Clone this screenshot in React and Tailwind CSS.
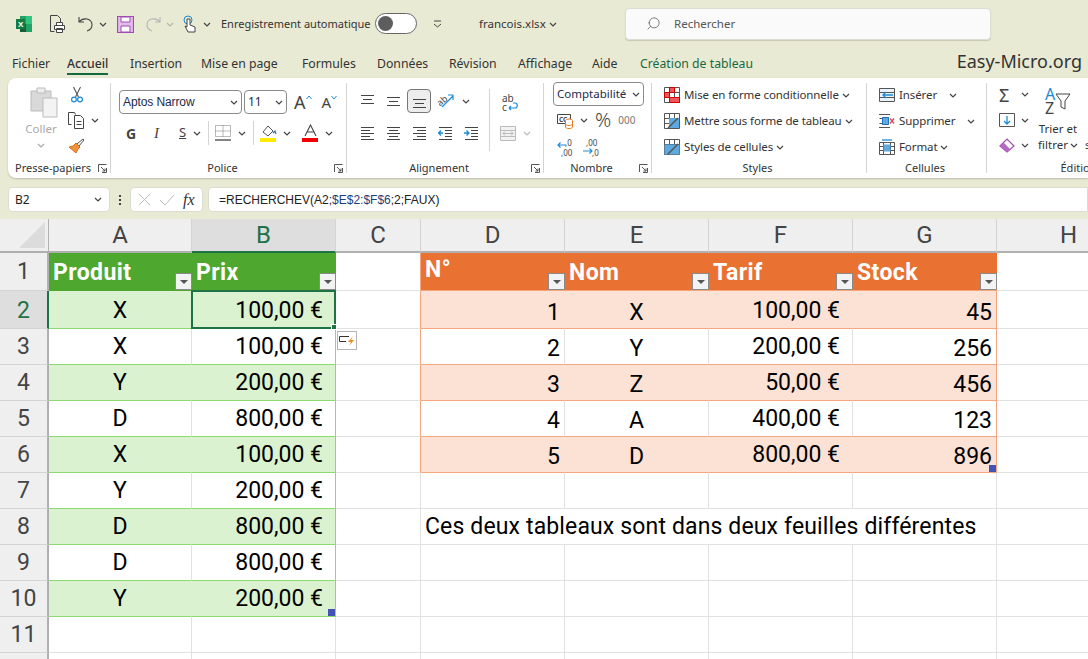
import { Search } from "lucide-react";

const ui = "font-['Noto_Sans',sans-serif]";
const COLS = ["A", "B", "C", "D", "E", "F", "G", "H"];
const HEIGHTS = [38, 38, 36, 36, 36, 36, 36, 36, 36, 36, 36, 36];

const LEFT = [
  ["X", "100,00 €"], ["X", "100,00 €"], ["Y", "200,00 €"], ["D", "800,00 €"], ["X", "100,00 €"],
  ["Y", "200,00 €"], ["D", "800,00 €"], ["D", "800,00 €"], ["Y", "200,00 €"],
];
const RIGHT = [
  ["1", "X", "100,00 €", "45"], ["2", "Y", "200,00 €", "256"], ["3", "Z", "50,00 €", "456"],
  ["4", "A", "400,00 €", "123"], ["5", "D", "800,00 €", "896"],
];

function Chev({ className = "", color = "#444" }) {
  return (
    <svg width="8" height="5" viewBox="0 0 8 5" className={`shrink-0 ${className}`}>
      <path d="M1 1l3 3 3-3" fill="none" stroke={color} strokeWidth="1.2" />
    </svg>
  );
}

function Launcher() {
  return (
    <svg width="9" height="9" viewBox="0 0 9 9" className="shrink-0">
      <path d="M.5 8V.5h8M8.5 4v4.5H4M3 3l4 4M7 4.5V7H4.5" fill="none" stroke="#555" strokeWidth="1" />
    </svg>
  );
}

function Lines({ rows, blue }) {
  return (
    <svg width="15" height="14" viewBox="0 0 15 14" className="shrink-0">
      {rows.map(([x1, x2, y], i) => (
        <path key={i} d={`M${x1} ${y}.5H${x2}`} stroke="#444" strokeWidth="1" />
      ))}
      {blue === "out" && <path d="M5 7H0.5M3 4.5L.5 7 3 9.5" fill="none" stroke="#1e8bd8" strokeWidth="1.3" />}
      {blue === "in" && <path d="M0 7h4.5M2.5 4.5L5 7 2.5 9.5" fill="none" stroke="#1e8bd8" strokeWidth="1.3" />}
    </svg>
  );
}

function TableIcon({ children }) {
  return (
    <svg width="16" height="16" viewBox="0 0 16 16" className="shrink-0">
      <path d="M.5.5h15v15H.5zM.5 5.5h15M.5 10.5h15M5.5.5v15M10.5.5v15" fill="#fff" stroke="#555" strokeWidth="1" />
      {children}
    </svg>
  );
}

function Group({ label, width, last, launcher = true, children }) {
  return (
    <div className={`${width} h-[90px] shrink-0 flex flex-col ${last ? "" : "border-r border-[#d4d4d4]"}`}>
      <div className="h-[78px] shrink-0">{children}</div>
      <div className="h-[14px] shrink-0 flex items-center pr-[3px] text-[11px] leading-[14px] text-[#333]">
        <span className="flex-1 text-center whitespace-nowrap">{label}</span>
        {launcher && <Launcher />}
      </div>
    </div>
  );
}

function StyleRow({ icon, text, chevGap = "ml-[3px]" }) {
  return (
    <div className="h-[26px] flex items-center pl-[12px]">
      {icon}
      <span className="ml-[4px] text-[11.5px] text-[#333] whitespace-nowrap tracking-[-0.1px] -mt-[1px]">{text}</span>
      <Chev className={chevGap} />
    </div>
  );
}

function Ribbon() {
  return (
    <div className={`ml-[8px] mt-[3px] h-[100px] bg-white rounded-l-[8px] shadow-[0_1px_2px_rgba(0,0,0,0.2)] flex py-[5px] ${ui}`}>
      <Group label="Presse-papiers" width="w-[103px]">
        <div className="flex pl-[16px]">
          <div className="w-[40px] flex flex-col items-center pt-[3px]">
            <svg width="28" height="32" viewBox="0 0 28 32">
              <path d="M1 5h20v20H1z" fill="#d9d9d9" stroke="#bbb" />
              <path d="M7 2h8v5H7z" fill="#eee" stroke="#bbb" />
              <path d="M13 12h14v19H13z" fill="#f3f3f3" stroke="#bbb" />
            </svg>
            <span className="text-[11.5px] text-[#aaa] leading-[16px] mt-[3px] mr-[6px]">Coller</span>
            <Chev className="mt-[6px] mr-[6px]" color="#aaa" />
          </div>
          <div className="flex flex-col pl-[4px] pt-[3px]">
            <svg width="12" height="17" viewBox="0 0 12 17" className="ml-[3px]">
              <path d="M2.500 1l5 10M9.500 1l-5 10" stroke="#555" strokeWidth="1.1" fill="none" />
              <circle cx="3" cy="13.500" r="2.400" fill="none" stroke="#1e8bd8" strokeWidth="1.2" />
              <circle cx="9" cy="13.500" r="2.400" fill="none" stroke="#1e8bd8" strokeWidth="1.2" />
            </svg>
            <div className="flex items-center mt-[9px]">
              <svg width="17" height="17" viewBox="0 0 17 17">
                <path d="M3.500 12.500H.5V.5h6l1 2M6.500 3.500h6l3 3v10h-9z" fill="#fff" stroke="#444" />
                <path d="M8.500 9.500h5M8.500 12.500h5" stroke="#444" />
              </svg>
              <Chev className="ml-[6px]" />
            </div>
            <svg width="17" height="16" viewBox="0 0 17 16" className="mt-[9px]">
              <path d="M1 9l7 6 2-4 2-2-4-4-3 3z" fill="#f0923b" stroke="#d9701a" />
              <path d="M9 6l6-5 1 1-5 6" fill="none" stroke="#555" />
            </svg>
          </div>
        </div>
      </Group>

      <Group label="Police" width="w-[236px]">
        <div className="flex items-center pl-[8px] pt-[7px]">
          <div className="w-[123px] h-[24px] border border-[#8a8a8a] rounded-[4px] flex items-center justify-between px-[3px] text-[12px] text-[#1c2b4a]">
            <span className="font-['Liberation_Sans',sans-serif] tracking-[-0.1px]">Aptos Narrow</span>
            <Chev />
          </div>
          <div className="ml-[2px] w-[43px] h-[24px] border border-[#8a8a8a] rounded-[4px] flex items-center justify-between px-[3px] text-[12px] text-[#1c2b4a]">
            <span>11</span>
            <Chev />
          </div>
          <span className="ml-[7px] text-[18px] leading-[20px] text-[#444]">A</span>
          <svg width="6" height="5" viewBox="0 0 6 5" className="mb-[9px]"><path d="M.5 4L3 1l2.500 3" fill="none" stroke="#1e8bd8" /></svg>
          <span className="ml-[10px] text-[15px] leading-[20px] text-[#444]">A</span>
          <svg width="6" height="5" viewBox="0 0 6 5" className="mb-[9px]"><path d="M.5 1L3 4l2.500-3" fill="none" stroke="#1e8bd8" /></svg>
        </div>
        <div className="flex items-center h-[26px] mt-[6px] pl-[15px] text-[#444]">
          <span className="w-[28px] text-[14px] font-bold">G</span>
          <span className="w-[25px] text-[15px] italic font-['Liberation_Serif',serif]">I</span>
          <span className="w-[14px] text-[13px] underline">S</span>
          <Chev />
          <div className="w-px h-[24px] bg-[#d4d4d4] ml-[7px]" />
          <svg width="16" height="16" viewBox="0 0 16 16" className="ml-[6px]">
            <path d="M.5.5h15v11H.5zM8 .5v11M.5 6h15" fill="none" stroke="#777" strokeDasharray="1 1" />
            <path d="M0 15h16" stroke="#333" strokeWidth="1.2" />
          </svg>
          <Chev className="ml-[7px]" />
          <div className="w-px h-[24px] bg-[#d4d4d4] ml-[7px]" />
          <svg width="17" height="18" viewBox="0 0 17 18" className="ml-[6px]">
            <path d="M3 8l5-6 5 5-5 5z" fill="#fff" stroke="#555" />
            <path d="M13 9l2-2 1 3" fill="none" stroke="#1e6fb8" strokeWidth="1.2" />
            <path d="M0 14h16v4H0z" fill="#ffea00" />
          </svg>
          <Chev className="ml-[6px]" />
          <svg width="17" height="18" viewBox="0 0 17 18" className="ml-[11px]">
            <path d="M3 12L8.500 1 14 12M5 8h7" fill="none" stroke="#444" strokeWidth="1.100" />
            <path d="M0 14h16v4H0z" fill="#f00000" />
          </svg>
          <Chev className="ml-[6px]" />
        </div>
      </Group>

      <Group label="Alignement" width="w-[197px]">
        <div className="flex">
          <div className="w-[142px] pl-[13px]">
            <div className="flex items-center h-[26px] mt-[5px] gap-[11px]">
              <Lines rows={[[1, 14, 1], [3, 12, 5], [1, 14, 9]]} />
              <Lines rows={[[1, 14, 3], [3, 12, 7], [1, 14, 11]]} />
              <div className="w-[24px] h-[24px] -ml-[5px] border border-[#777] rounded-[4px] bg-[#ededed] flex items-center justify-center">
                <Lines rows={[[1, 14, 5], [3, 12, 9], [1, 14, 13]]} />
              </div>
              <svg width="18" height="16" viewBox="0 0 18 16" className="-ml-[5px] overflow-visible">
                <text x="0" y="11" fontSize="9" fill="#444" transform="rotate(-40 5 8)" fontFamily="Noto Sans">ab</text>
                <path d="M5 14L16 3M11 2h5v5" fill="none" stroke="#1e8bd8" strokeWidth="1.200" />
              </svg>
              <Chev className="-ml-[4px]" />
            </div>
            <div className="flex items-center h-[26px] mt-[6px] gap-[11px]">
              <Lines rows={[[1, 14, 1], [1, 10, 4], [1, 14, 7], [1, 10, 10], [1, 14, 13]]} />
              <Lines rows={[[1, 14, 1], [3, 12, 4], [1, 14, 7], [3, 12, 10], [1, 14, 13]]} />
              <Lines rows={[[1, 14, 1], [5, 14, 4], [1, 14, 7], [5, 14, 10], [1, 14, 13]]} />
              <Lines rows={[[1, 14, 1], [7, 14, 4], [7, 14, 7], [7, 14, 10], [1, 14, 13]]} blue="out" />
              <Lines rows={[[1, 14, 1], [7, 14, 4], [7, 14, 7], [7, 14, 10], [1, 14, 13]]} blue="in" />
            </div>
          </div>
          <div className="w-px h-[62px] bg-[#d4d4d4] mt-[6px]" />
          <div className="pl-[12px] pt-[11px]">
            <svg width="18" height="19" viewBox="0 0 18 19" className="overflow-visible">
              <text x="0" y="8" fontSize="10" fill="#444" fontFamily="Noto Sans">ab</text>
              <text x="0" y="17" fontSize="10" fill="#444" fontFamily="Noto Sans">c</text>
              <path d="M7 14h6c3 0 3-5 0-5h-2M7 14l2-2M7 14l2 2" fill="none" stroke="#1e8bd8" strokeWidth="1.200" />
            </svg>
            <div className="flex items-center mt-[13px] -ml-[2px]">
              <svg width="16" height="15" viewBox="0 0 16 15">
                <path d="M.5.5h15v14H.5z" fill="#f2f2f2" stroke="#bbb" />
                <path d="M.5 4.500h15M.5 10.500h15M3 7.500h10M5 5.500l-2 2 2 2M11 5.500l2 2-2 2" fill="none" stroke="#bbb" />
              </svg>
              <Chev className="ml-[7px]" color="#bbb" />
            </div>
          </div>
        </div>
      </Group>

      <Group label="Nombre" width="w-[108px]">
        <div className="pl-[9px]">
          <div className="w-[91px] h-[24px] -mt-px border border-[#8a8a8a] rounded-[4px] flex items-center justify-between px-[3px] text-[11.5px] text-[#1c2b4a]">
            <span>Comptabilité</span>
            <Chev />
          </div>
          <div className="flex items-center h-[28px] pl-[4px]">
            <svg width="17" height="17" viewBox="0 0 17 17">
              <path d="M.5 2.500h13v9H.5z" fill="#fff" stroke="#444" />
              <text x="2" y="9.500" fontSize="6.500" fontWeight="bold" fill="#444" fontFamily="Noto Sans">CC</text>
              <ellipse cx="12" cy="8.500" rx="3.500" ry="1.500" fill="#fff" stroke="#e87a1d" />
              <path d="M8.500 8.500v6.500c0 2 7 2 7 0V8.500M8.500 12c0 2 7 2 7 0" fill="#fff" stroke="#e87a1d" />
            </svg>
            <Chev className="ml-[6px]" />
            <span className="ml-[7px] text-[20px] font-light leading-[24px] text-[#444]">%</span>
            <span className="ml-[7px] text-[10px] text-[#777]">000</span>
          </div>
          <div className="flex items-center h-[26px] pl-[4px] gap-[9px]">
            <svg width="17" height="19" viewBox="0 0 17 19">
              <text x="8" y="8" fontSize="8" fill="#444" fontFamily="Noto Sans">,0</text>
              <text x="4" y="18" fontSize="8" fill="#444" fontFamily="Noto Sans">,00</text>
              <path d="M9 7H1M3.500 4.500L1 7l2.500 2.500" fill="none" stroke="#1e8bd8" strokeWidth="1.200" />
            </svg>
            <svg width="17" height="19" viewBox="0 0 17 19">
              <text x="3" y="8" fontSize="8" fill="#444" fontFamily="Noto Sans">,00</text>
              <text x="9" y="18" fontSize="8" fill="#444" fontFamily="Noto Sans">,0</text>
              <path d="M0 13h9M6.500 10.500L9 13l-2.500 2.500" fill="none" stroke="#1e8bd8" strokeWidth="1.200" />
            </svg>
          </div>
        </div>
      </Group>

      <Group label="Styles" width="w-[215px]" launcher={false}>
        <div className="-mt-[1px]">
          <StyleRow text="Mise en forme conditionnelle" icon={
            <TableIcon><path d="M5.500.5h5v5h-5zM.5 5.500h5v5h-5zM5.500 10.500h10v5h-10z" fill="#f0565a" stroke="#c00" /></TableIcon>
          } />
          <StyleRow text="Mettre sous forme de tableau" icon={
            <TableIcon><path d="M5 5h10v10H5z" fill="#5da9e0" /><path d="M4 15L14 5" stroke="#555" strokeWidth="1.500" /></TableIcon>
          } />
          <StyleRow text="Styles de cellules" icon={
            <TableIcon><path d="M.5 5.500h15v10H.5z" fill="#5da9e0" /><path d="M4 15L14 5" stroke="#555" strokeWidth="1.500" /></TableIcon>
          } />
        </div>
      </Group>

      <Group label="Cellules" width="w-[120px]" launcher={false}>
        <div className="-mt-[1px]">
          <StyleRow text="Insérer" chevGap="ml-[12px]" icon={
            <svg width="16" height="14" viewBox="0 0 16 14" className="shrink-0">
              <path d="M.5.5h15v13H.5zM.5 4.500h15M.5 9.500h15" fill="#e8f3fb" stroke="#555" />
              <path d="M14 7H4M7 4L4 7l3 3" fill="none" stroke="#1e8bd8" strokeWidth="1.300" />
            </svg>
          } />
          <StyleRow text="Supprimer" chevGap="ml-[12px]" icon={
            <svg width="16" height="14" viewBox="0 0 16 14" className="shrink-0">
              <path d="M0 .5h11M0 13.500h11M.5 4.500H3M.5 9.500H3" fill="none" stroke="#555" />
              <path d="M3.500 3.500h6v7h-6z" fill="#5da9e0" stroke="#1e6fb8" />
              <path d="M11 4.500l4 5M15 4.500l-4 5" stroke="#e8484d" strokeWidth="1.300" />
            </svg>
          } />
          <StyleRow text="Format" icon={
            <svg width="16" height="16" viewBox="0 0 16 16" className="shrink-0">
              <path d="M.5 3.500h15v12H.5zM.5 7.500h15M.5 11.500h15M4.500 3.500v12M11.500 3.500v12" fill="#fff" stroke="#555" />
              <path d="M4.500 5.500h7v7h-7z" fill="#5da9e0" />
              <path d="M3 1h10" stroke="#1e8bd8" strokeWidth="1.300" />
            </svg>
          } />
        </div>
      </Group>

      <Group label="Édition" width="w-[186px]" last launcher={false}>
        <div className="flex pl-[12px]">
          <div className="w-[39px] shrink-0 -mt-[1px]">
            <div className="h-[25px] flex items-center">
              <span className="w-[16px] text-[18px] leading-[20px] text-[#444]">Σ</span>
              <Chev className="ml-[6px]" />
            </div>
            <div className="h-[26px] flex items-center">
              <svg width="16" height="14" viewBox="0 0 16 14" className="shrink-0">
                <path d="M.5.5h15v13H.5z" fill="#fff" stroke="#555" />
                <path d="M8 3v8M5 8l3 3 3-3" fill="none" stroke="#1e8bd8" strokeWidth="1.300" />
              </svg>
              <Chev className="ml-[6px]" />
            </div>
            <div className="h-[25px] flex items-center">
              <svg width="16" height="15" viewBox="0 0 16 15" className="shrink-0">
                <path d="M1 8l7-7 7 7-7 6z" fill="#fff" stroke="#a04cb0" strokeWidth="1.200" />
                <path d="M1 8l3.500-3.500 7 7L8 14z" fill="#b768c4" />
              </svg>
              <Chev className="ml-[6px]" />
            </div>
          </div>
          <div className="flex flex-col items-center w-[40px] shrink-0">
            <div className="flex items-start h-[30px] mt-[4px]">
              <div className="flex flex-col text-[16px] leading-[14px]">
                <span className="text-[#1e8bd8]">A</span>
                <span className="text-[#444]">Z</span>
              </div>
              <svg width="16" height="18" viewBox="0 0 16 18" className="mt-[6px]">
                <path d="M1 1h14L10 8v8l-4-2V8z" fill="#fff" stroke="#444" />
              </svg>
            </div>
            <span className="text-[11.5px] leading-[16px] mt-[4px] text-[#333] whitespace-nowrap">Trier et</span>
            <span className="text-[11.5px] leading-[16px] text-[#333] flex items-center whitespace-nowrap">filtrer<Chev className="ml-[2px]" /></span>
          </div>
          <span className="ml-[7px] mt-[54px] text-[11.5px] leading-[16px] text-[#333]">s</span>
        </div>
      </Group>
    </div>
  );
}

function FilterButton() {
  return (
    <div className="absolute right-0 bottom-0 w-[17px] h-[17px] bg-[#f3f3f3] border border-[#8a8a8a] flex items-center justify-center">
      <div className="w-0 h-0 border-l-[4px] border-r-[4px] border-t-[4px] border-l-transparent border-r-transparent border-t-[#555]" />
    </div>
  );
}

const cell = "relative flex items-center border-r border-b border-[#e1e1e1] text-[23px] leading-[26px] text-black whitespace-nowrap";
const headCell = "relative flex items-center pl-[4px] pt-[2px] text-white font-bold text-[23px] leading-[26px] tracking-[0.4px] border-b";

function LeftCells({ r }) {
  if (r === 0) {
    return (
      <>
        <div className={`${headCell} bg-[#4ea72e] border-[#4ea72e]`}>Produit<FilterButton /></div>
        <div className={`${headCell} bg-[#4ea72e] border-[#4ea72e]`}>Prix<FilterButton /></div>
      </>
    );
  }
  const row = LEFT[r - 1];
  if (!row) {
    return (<><div className={cell} /><div className={cell} /></>);
  }
  const band = r % 2 === 1;
  return (
    <>
      <div className={`${cell} justify-center border-b-[#8ed973] ${r === 1 ? "pt-[3px]" : ""} ${band ? "bg-[#daf2d0] border-r-[#daf2d0]" : ""}`}>{row[0]}</div>
      <div className={`${cell} justify-end pr-[12px] border-b-[#8ed973] border-r-[#8ed973] ${r === 1 ? "pt-[3px]" : ""} ${band ? "bg-[#daf2d0]" : ""}`}>
        {row[1]}
        {r === 1 && (
          <div className="absolute z-10 -left-px -top-px -right-px -bottom-px border-2 border-[#1f7246]">
            <div className="absolute -right-[3px] -bottom-[3px] w-[6px] h-[6px] bg-[#1f7246] border border-white" />
          </div>
        )}
        {r === 9 && <div className="absolute right-0 bottom-0 w-[7px] h-[7px] bg-[#4352b5]" />}
      </div>
    </>
  );
}

function RightCells({ r }) {
  if (r === 0) {
    return ["N°", "Nom", "Tarif", "Stock"].map((t) => (
      <div key={t} className={`${headCell} bg-[#e97132] border-[#f6a57d]`}>
        <span className={t === "N°" ? "-mt-[6px]" : ""}>{t}</span>
        <FilterButton />
      </div>
    ));
  }
  if (r === 7) {
    return <div className={`${cell} col-span-4 pl-[4px] tracking-[0.14px] border-r-[#e1e1e1]`}>Ces deux tableaux sont dans deux feuilles différentes</div>;
  }
  const row = RIGHT[r - 1];
  if (!row) {
    return [0, 1, 2, 3].map((i) => <div key={i} className={cell} />);
  }
  const band = r % 2 === 1;
  const inner = `border-b-[#f6a57d] ${band ? "bg-[#fbe2d5] border-r-[#fbe2d5]" : ""}`;
  const low = r === 1 ? "pt-[6px]" : "pt-[4px]";
  return (
    <>
      <div className={`${cell} justify-end pr-[4px] ${low} ${inner}`}>{row[0]}</div>
      <div className={`${cell} justify-center ${low} ${inner}`}>{row[1]}</div>
      <div className={`${cell} justify-end pr-[12px] ${r === 1 ? "pt-[2px]" : ""} ${inner}`}>{row[2]}</div>
      <div className={`${cell} justify-end pr-[4px] ${low} border-b-[#f6a57d] border-r-[#f6a57d] ${band ? "bg-[#fbe2d5]" : ""}`}>
        {row[3]}
        {r === 5 && <div className="absolute right-0 bottom-0 w-[7px] h-[7px] bg-[#4352b5]" />}
      </div>
    </>
  );
}

function Sheet() {
  return (
    <div className="mt-[7px] grid grid-cols-[49px_143px_144px_85px_144px_144px_144px_144px_144px] font-['Roboto',sans-serif] bg-white">
      <div className="h-[34px] bg-[#efefef] border-r border-b-2 border-[#b0b0b0] flex items-end justify-end p-[3px]">
        <div className="w-0 h-0 border-l-[26px] border-b-[26px] border-l-transparent border-b-[#dcdcdc]" />
      </div>
      {COLS.map((c) => (
        <div key={c} className={`h-[34px] flex items-center justify-center text-[24px] leading-[28px] border-r border-[#d4d4d4] border-b-2 ${c === "B" ? "bg-[#dedede] text-[#1f7246] border-b-[#1f7246]" : "bg-[#efefef] text-[#444] border-b-[#b0b0b0]"}`}>{c}</div>
      ))}
      {HEIGHTS.map((h, r) => (
        <div key={r} className="contents">
          <div style={{ height: h }} className={`flex items-center justify-center text-[23px] leading-[26px] border-b border-[#d4d4d4] border-r-2 ${r === 1 ? "bg-[#dedede] text-[#1f7246] border-r-[#1f7246] pt-[3px]" : "bg-[#efefef] text-[#444] border-r-[#b0b0b0]"}`}>{r + 1}</div>
          <LeftCells r={r} />
          <div className={`${cell} ${r <= 5 ? "border-r-[#f6a57d]" : ""}`}>
            {r === 2 && (
              <div className="absolute left-[1px] top-[2px] w-[20px] h-[19px] bg-white border border-[#b5b5b5] flex items-center justify-center">
                <svg width="16" height="12" viewBox="0 0 16 12">
                  <path d="M10 1.500H.5v5H7" fill="none" stroke="#333" />
                  <path d="M14 1l-5 6h3l-2 4 5-6h-3z" fill="#ee8a1e" />
                </svg>
              </div>
            )}
          </div>
          <RightCells r={r} />
          <div className={cell} />
        </div>
      ))}
    </div>
  );
}

export default function App() {
  return (
    <div className={`w-[1088px] h-[659px] overflow-hidden bg-[#e9ead3] ${ui}`}>
      {/* barre de titre */}
      <div className="h-[48px] flex items-center pl-[16px] text-[#333]">
        <svg width="16" height="16" viewBox="0 0 16 16">
          <path d="M4 0h12v16H4z" fill="#21a366" />
          <path d="M10 0h6v8h-6z" fill="#33c481" />
          <path d="M4 8h6v8H4z" fill="#185c37" />
          <path d="M0 3h9v10H0z" fill="#107c41" />
          <text x="2" y="11" fontSize="8" fontWeight="bold" fill="#fff" fontFamily="Liberation Sans">X</text>
        </svg>
        <svg width="15" height="18" viewBox="0 0 15 18" className="ml-[18px]">
          <path d="M.5.500h7l3 3v4M.5.500v16h4" fill="none" stroke="#444" />
          <path d="M4.500 10.500h10v4h-10zM6.500 10.500v-3h6v3M6.500 13.500h6v4h-6z" fill="#fff" stroke="#444" />
        </svg>
        <svg width="16" height="16" viewBox="0 0 16 16" className="ml-[13px]">
          <path d="M1 1v5h5M1 6c4-5 13-4 13 3 0 3-2 5-5 6" fill="none" stroke="#444" strokeWidth="1.100" />
        </svg>
        <Chev className="ml-[5px]" />
        <svg width="17" height="17" viewBox="0 0 17 17" className="ml-[10px]">
          <path d="M.5.500h16v16H.500z" fill="#e4bcec" stroke="#a04cb0" strokeWidth="1.200" />
          <path d="M4 1h9v5H4zM4 10h9v6H4z" fill="#fff" stroke="#a04cb0" />
        </svg>
        <svg width="16" height="16" viewBox="0 0 16 16" className="ml-[11px]">
          <path d="M15 1v5h-5M15 6C11 1 2 2 2 9c0 3 2 5 5 6" fill="none" stroke="#b5b5b5" strokeWidth="1.100" />
        </svg>
        <Chev className="ml-[5px]" color="#b5b5b5" />
        <svg width="13" height="18" viewBox="0 0 13 18" className="ml-[9px]">
          <circle cx="5" cy="5" r="4" fill="none" stroke="#1e8bd8" />
          <path d="M4 4v8l-2-1 3 6h7v-5l-5-2V4z" fill="#fff" stroke="#444" />
        </svg>
        <Chev className="ml-[7px]" />
        <span className="ml-[10px] w-[147px] text-[11px] whitespace-nowrap">Enregistrement automatique</span>
        <div className="ml-[7px] w-[42px] h-[21px] bg-white border border-[#666] rounded-full flex items-center pl-[2px] -mt-px">
          <div className="w-[15px] h-[15px] rounded-full bg-[#5d5d5d]" />
        </div>
        <svg width="9" height="8" viewBox="0 0 9 8" className="ml-[16px]">
          <path d="M1 1h7M1 4l3.500 3L8 4" fill="none" stroke="#444" />
        </svg>
        <span className="ml-[37px] w-[65px] text-[11.500px] whitespace-nowrap">francois.xlsx</span>
        <Chev className="ml-[4px] w-[10px]" />
        <div className="ml-[67px] w-[366px] h-[32px] -mt-[1px] bg-[#fafafa] rounded-[4px] border border-[#dcdcd0] shadow-[0_1px_1px_rgba(0,0,0,0.15)] flex items-center pl-[20px] text-[11.500px] text-[#555]">
          <Search size={15} strokeWidth={1.2} className="-scale-x-100 text-[#555]" />
          <span className="ml-[13px]">Rechercher</span>
        </div>
      </div>

      {/* onglets */}
      <div className="h-[27px] flex items-start pl-[12px] pt-[7px] text-[12.250px] text-[#333]">
        {[["Fichier", "w-[55px]"], ["Accueil", "w-[63px]"], ["Insertion", "w-[71px]"], ["Mise en page", "w-[101px]"], ["Formules", "w-[75px]"], ["Données", "w-[72px]"], ["Révision", "w-[69px]"], ["Affichage", "w-[74px]"], ["Aide", "w-[48px]"]].map(([t, w]) => (
          <div key={t} className={`${w} shrink-0`}>
            <span className={`inline-block leading-[18px] ${t === "Accueil" ? "border-b-[2px] border-[#17693f] font-medium" : ""}`}>{t}</span>
          </div>
        ))}
        <span className="text-[#17693f] leading-[18px]">Création de tableau</span>
        <span className="ml-auto mr-[6px] -mt-[5px] text-[18px] leading-[22px] text-[#333]">Easy-Micro.org</span>
      </div>

      <Ribbon />

      {/* barre de formule */}
      <div className={`mt-[9px] h-[25px] flex items-center pl-[8px] text-[12px] text-[#222] ${ui}`}>
        <div className="w-[102px] h-[25px] bg-white rounded-[4px] border border-[#dcdcd0] flex items-center justify-between pl-[6px] pr-[6px]">
          <span>B2</span>
          <Chev className="w-[10px]" />
        </div>
        <div className="ml-[9px] flex flex-col gap-[2px] w-[3px]">
          <div className="w-[2px] h-[2px] bg-[#444]" /><div className="w-[2px] h-[2px] bg-[#444]" /><div className="w-[2px] h-[2px] bg-[#444]" />
        </div>
        <div className="ml-[8px] w-[73px] h-[25px] bg-white rounded-[4px] border border-[#dcdcd0] flex items-center pl-[7px]">
          <svg width="13" height="13" viewBox="0 0 13 13"><path d="M1 1l11 11M12 1L1 12" stroke="#bbb" /></svg>
          <svg width="16" height="13" viewBox="0 0 16 13" className="ml-[8px]"><path d="M1 7l5 5 9-10" fill="none" stroke="#bbb" /></svg>
          <span className="ml-[8px] text-[16px] italic font-['Liberation_Serif',serif] text-[#333]">fx</span>
        </div>
        <div className="ml-[5px] flex-1 h-[25px] bg-white rounded-l-[4px] border border-[#dcdcd0] flex items-center pl-[10px] font-['Liberation_Sans',sans-serif] text-[12px]">
          =RECHERCHEV(A2;<span className="text-[#1c3f7a]">$E$2:$F$6</span>;2;FAUX)
        </div>
      </div>

      <Sheet />
    </div>
  );
}
